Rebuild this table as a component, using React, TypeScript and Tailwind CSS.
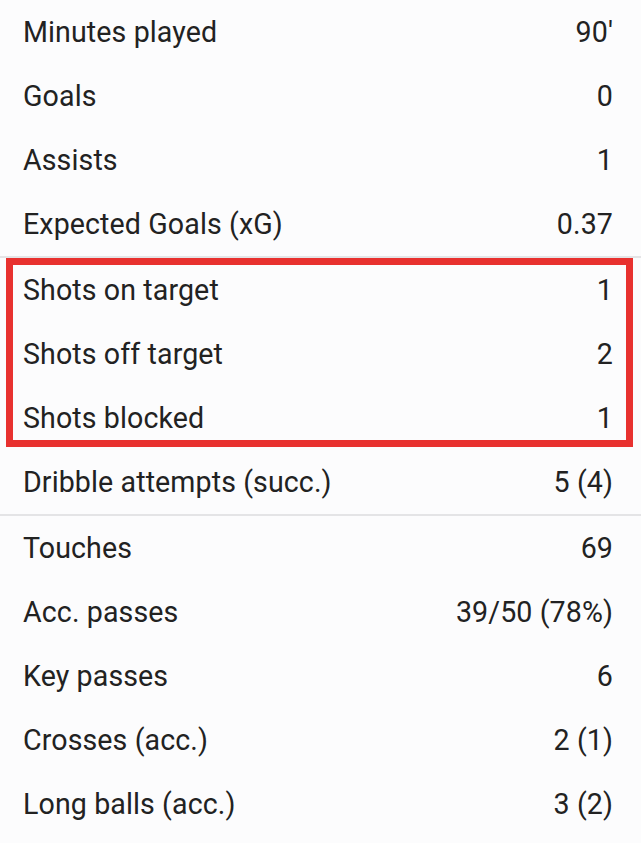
import React from "react";

type Row = [string, string];

const sectionA: Row[] = [
  ["Minutes played", "90'"],
  ["Goals", "0"],
  ["Assists", "1"],
  ["Expected Goals (xG)", "0.37"],
];
const sectionB: Row[] = [
  ["Shots on target", "1"],
  ["Shots off target", "2"],
  ["Shots blocked", "1"],
];
const sectionC: Row[] = [["Dribble attempts (succ.)", "5 (4)"]];
const sectionD: Row[] = [
  ["Touches", "69"],
  ["Acc. passes", "39/50 (78%)"],
  ["Key passes", "6"],
  ["Crosses (acc.)", "2 (1)"],
  ["Long balls (acc.)", "3 (2)"],
];

function StatRow({ label, value }: { label: string; value: string }) {
  return (
    <div className="flex h-[64px] items-center justify-between pl-[23px] pr-[28px]">
      <span>{label}</span>
      <span>{value}</span>
    </div>
  );
}

function Divider() {
  return <div className="h-[2px] bg-[#e4e4e6]" />;
}

export default function App() {
  return (
    <div
      className="h-[843px] w-[641px] overflow-hidden bg-[#fcfcfd] text-[28.6px] font-normal tracking-[0.1px] text-[#222222]"
      style={{ fontFamily: "Roboto, 'Liberation Sans', sans-serif" }}
    >
      {sectionA.map(([l, v]) => (
        <StatRow key={l} label={l} value={v} />
      ))}
      <Divider />
      <div className="relative">
        {sectionB.map(([l, v]) => (
          <StatRow key={l} label={l} value={v} />
        ))}
        <div className="pointer-events-none absolute left-[6px] top-0 h-[189px] w-[627px] border-[7px] border-[#e8312f]" />
      </div>
      {sectionC.map(([l, v]) => (
        <StatRow key={l} label={l} value={v} />
      ))}
      <Divider />
      {sectionD.map(([l, v]) => (
        <StatRow key={l} label={l} value={v} />
      ))}
    </div>
  );
}
